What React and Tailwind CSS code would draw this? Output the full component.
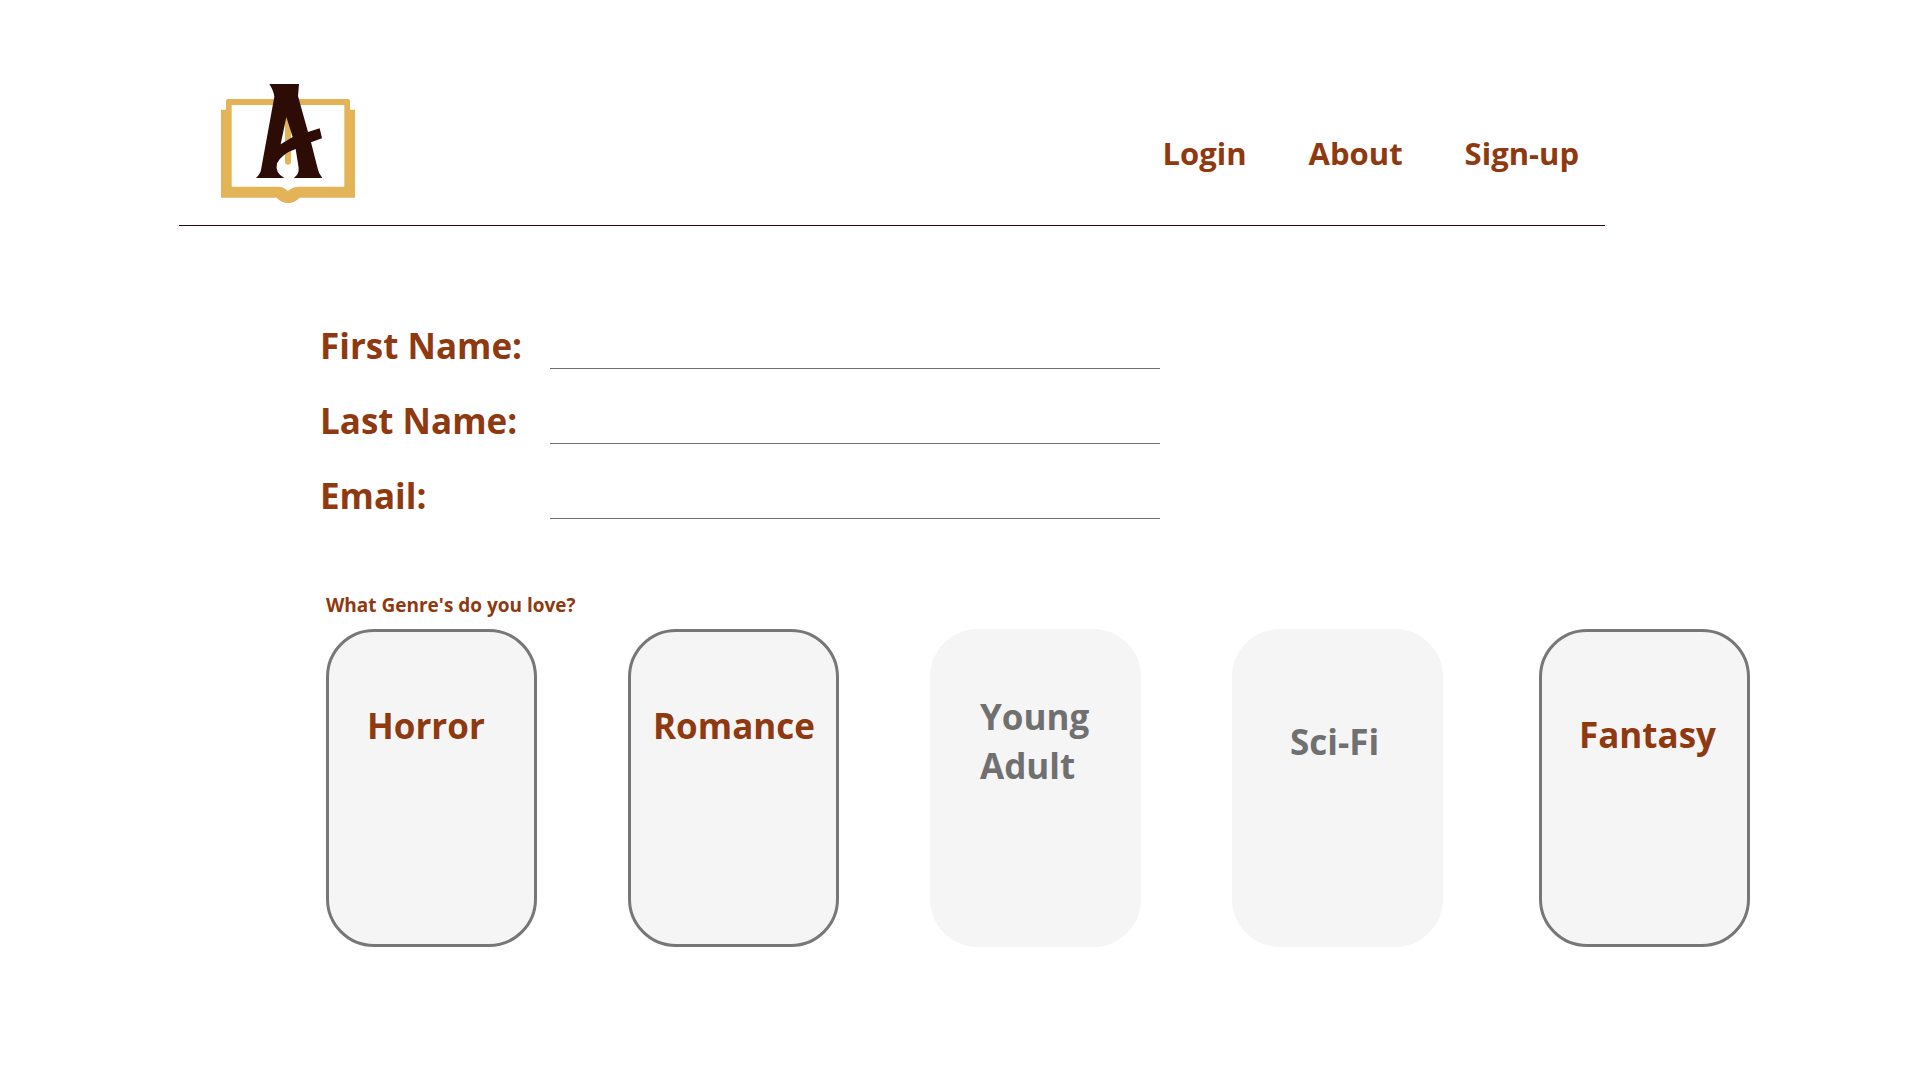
import React, { useState } from "react";

const links = ["Login", "About", "Sign-up"];

const fields = [
  { id: "first-name", label: "First Name:", type: "text" },
  { id: "last-name", label: "Last Name:", type: "text" },
  { id: "email", label: "Email:", type: "email" },
];

const genres = [
  { name: "Horror", pad: "pt-[69px] pl-[38px]" },
  { name: "Romance", pad: "pt-[69px] pl-[22px]" },
  { name: "Young Adult", pad: "pt-[60px] pl-[47px] pr-8" },
  { name: "Sci-Fi", pad: "pt-[85px] pl-[55px]" },
];

function Logo() {
  return (
    <svg viewBox="33 42 402 357" className="h-[119px] w-[134px]" aria-hidden="true">
      <path
        fill="#e2b357"
        fillRule="evenodd"
        d="M33 119H48V93Q48 87 54 87H414Q420 87 420 93V119H435V383H269Q254 399 234 399Q214 399 200 383H33ZM65 105V350H203Q222 350 234 363Q248 350 266 350H403V105Z"
      />
      <path d="M234 110V275" stroke="#e2b357" strokeWidth="18" strokeLinecap="round" />
      <path
        fill="#2d0c06"
        fillRule="evenodd"
        d="M178 42H267L264 78L294 186L329 175L336 205L303 217L322 292Q325 310 337 324H251Q268 312 266 294L257 237Q216 251 201 280Q194 309 223 324H138Q153 310 154 294L193 80Q191 62 178 42ZM229 141L212 223L248 201Z"
      />
    </svg>
  );
}

function GenreCard({ name, pad, selected, onToggle }) {
  return (
    <button
      type="button"
      aria-pressed={selected}
      onClick={onToggle}
      className={`flex h-[318px] w-[211px] shrink-0 items-start rounded-[48px] border-3 bg-[#f5f5f5] text-left text-[35px]/[49px] font-bold ${pad} ${
        selected ? "border-[#777777] text-[#8f3910]" : "border-[#f5f5f5] text-[#707070]"
      }`}
    >
      {name}
    </button>
  );
}

export default function App() {
  const [selected, setSelected] = useState(["Horror", "Romance", "Fantasy"]);
  const toggle = (name) =>
    setSelected((list) => (list.includes(name) ? list.filter((n) => n !== name) : [...list, name]));

  return (
    <div className="min-h-screen bg-white pb-16 font-['Open_Sans','Noto_Sans',sans-serif] text-[#8f3910]">
      <header className="ml-[179px] flex max-w-[1426px] items-start justify-between border-b border-[#290a0a] pt-[84px] pr-[26px] pb-[22px] pl-[42px]">
        <a href="#home" aria-label="Home">
          <Logo />
        </a>
        <nav className="flex gap-[62px] pt-12 text-[31px]/[42px] font-bold">
          {links.map((l) => (
            <a key={l} href={`#${l.toLowerCase()}`}>
              {l}
            </a>
          ))}
        </nav>
      </header>

      <main className="pt-[95px] pl-80">
        <form>
          <div className="flex max-w-[840px] flex-col gap-[27px]">
            {fields.map((f) => (
              <div key={f.id} className="flex h-12">
                <label htmlFor={f.id} className="w-[230px] shrink-0 text-[35px]/[50px] font-bold whitespace-nowrap">
                  {f.label}
                </label>
                <input
                  id={f.id}
                  type={f.type}
                  className="min-w-0 flex-1 border-b border-[#707070] px-2 text-2xl outline-none"
                />
              </div>
            ))}
          </div>

          <fieldset className="mt-[72px] max-w-[1430px] pl-1.5">
            <legend className="text-[19px]/[28px] font-bold">What Genre's do you love?</legend>
            <div className="flex justify-between pt-2.5">
              <div className="flex gap-[91px]">
                {genres.map((g) => (
                  <GenreCard
                    key={g.name}
                    {...g}
                    selected={selected.includes(g.name)}
                    onToggle={() => toggle(g.name)}
                  />
                ))}
              </div>
              <GenreCard
                name="Fantasy"
                pad="pt-[78px] pl-[37px]"
                selected={selected.includes("Fantasy")}
                onToggle={() => toggle("Fantasy")}
              />
            </div>
          </fieldset>
        </form>
      </main>
    </div>
  );
}
